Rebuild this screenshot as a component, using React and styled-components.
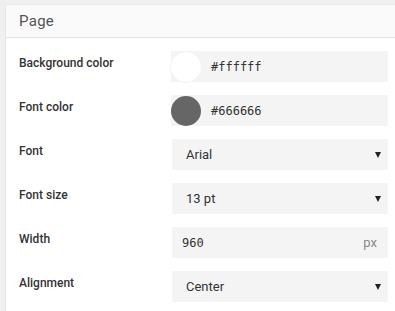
import React from "react";
import styled, { createGlobalStyle } from "styled-components";

const Global = createGlobalStyle`
  html, body { margin: 0; padding: 0; background: #f0f0f0; }
  body { font-family: Roboto, "Noto Sans", Arial, sans-serif; overflow: hidden; }
`;

const Page = styled.div`
  padding: 4px 0 0 5px;
  height: 311px;
  box-sizing: border-box;
  display: flex;
`;

const Panel = styled.section`
  flex: 1;
  background: #ffffff;
  border-left: 1px solid #e6e6e6;
  border-top: 1px solid #ececec;
  box-sizing: border-box;
`;

const Header = styled.div`
  height: 32px;
  display: flex;
  align-items: center;
  padding-left: 13px;
  background: #fafafa;
  border-bottom: 1px solid #e2e2e2;
  color: #555555;
  font-size: 15px;
  font-weight: 400;
  letter-spacing: 0.3px;
`;

const Body = styled.div`
  display: grid;
  grid-template-columns: 153px 216px;
  grid-auto-rows: 31px;
  row-gap: 13px;
  padding: 13px 0 0 13px;
`;

const Label = styled.div`
  font-size: 12px;
  font-weight: 500;
  color: #333333;
  line-height: 14px;
  padding-top: 5px;
`;

const Field = styled.div`
  display: flex;
  align-items: center;
  background: #f4f4f4;
  height: 31px;
  padding: 0 ${(p) => (p.$unit ? "11px" : "7px")} 0 ${(p) => (p.$mono ? "10px" : "14px")};
  box-sizing: border-box;
  font-size: 13px;
  color: #333333;
`;

const ColorField = styled(Field)`
  padding-left: 0;
  margin-left: -1px;
`;

const Swatch = styled.span`
  width: 30px;
  height: 30px;
  border-radius: 50%;
  background: ${(p) => p.$color};
  box-shadow: 0 0 0 1px ${(p) => (p.$color === "#ffffff" ? "#f2f2f2" : "transparent")};
  flex: none;
  margin-right: 10px;
`;

const Mono = styled.span`
  font-family: "DejaVu Sans Mono", "Liberation Mono", monospace;
  font-size: 12px;
  color: #333333;
`;

const Value = styled.span`
  flex: 1;
`;

const Unit = styled.span`
  color: #888888;
  font-size: 13px;
`;

const Caret = styled.span`
  width: 0;
  height: 0;
  border-left: 3px solid transparent;
  border-right: 3px solid transparent;
  border-top: 6px solid #222222;
`;

const ColorRow = ({ label, color }) => (
  <>
    <Label>{label}</Label>
    <ColorField>
      <Swatch $color={color} />
      <Mono>{color}</Mono>
    </ColorField>
  </>
);

const SelectRow = ({ label, value }) => (
  <>
    <Label>{label}</Label>
    <Field>
      <Value>{value}</Value>
      <Caret />
    </Field>
  </>
);

export default function App() {
  return (
    <>
      <Global />
      <Page>
        <Panel>
          <Header>Page</Header>
          <Body>
            <ColorRow label="Background color" color="#ffffff" />
            <ColorRow label="Font color" color="#666666" />
            <SelectRow label="Font" value="Arial" />
            <SelectRow label="Font size" value="13 pt" />
            <Label>Width</Label>
            <Field $mono $unit>
              <Value>
                <Mono>960</Mono>
              </Value>
              <Unit>px</Unit>
            </Field>
            <SelectRow label="Alignment" value="Center" />
          </Body>
        </Panel>
      </Page>
    </>
  );
}
